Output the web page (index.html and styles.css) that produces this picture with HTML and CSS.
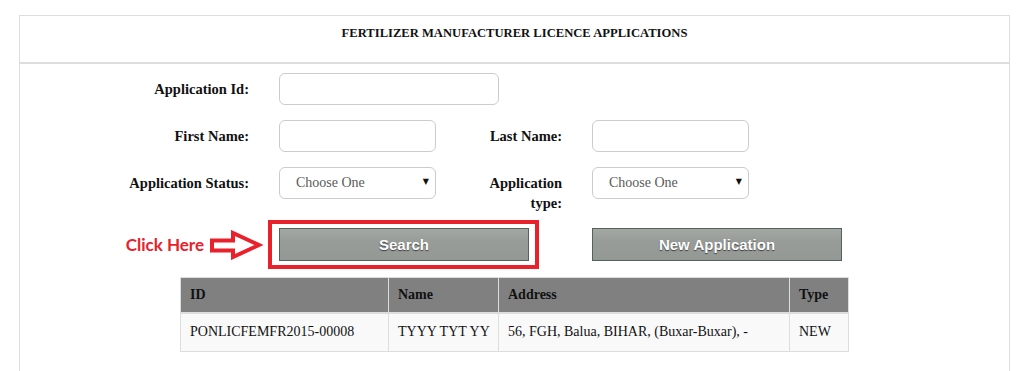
FILE: index.html
```html
<!DOCTYPE html>
<html>
<head>
<meta charset="utf-8">
<title>Fertilizer Manufacturer Licence Applications</title>
<link rel="stylesheet" href="styles.css">
</head>
<body>
<div class="panel">
  <div class="panel-head">FERTILIZER MANUFACTURER LICENCE APPLICATIONS</div>
  <div class="panel-body">
    <div class="form-grid">
      <label class="lbl">Application Id:</label>
      <input class="field field-wide" type="text">

      <label class="lbl">First Name:</label>
      <input class="field" type="text">
      <label class="lbl">Last Name:</label>
      <input class="field" type="text">

      <label class="lbl">Application Status:</label>
      <span class="select-wrap"><select class="field select"><option>Choose One</option></select></span>
      <label class="lbl">Application type:</label>
      <span class="select-wrap"><select class="field select"><option>Choose One</option></select></span>
    </div>

    <div class="btn-row">
      <span class="highlight">
        <span class="callout">
          <span class="callout-text">Click Here</span>
          <svg class="callout-arrow" width="54" height="30" viewBox="0 0 54 30">
            <polygon points="3,10.5 24,10.5 24,3 50,15 24,27 24,20.5 3,20.5" fill="#fff" stroke="#e8212b" stroke-width="4" stroke-linejoin="miter"/>
          </svg>
        </span>
        <button class="btn">Search</button>
      </span>
      <button class="btn btn-new">New Application</button>
    </div>

    <table class="results">
      <thead>
        <tr><th class="c-id">ID</th><th class="c-name">Name</th><th class="c-addr">Address</th><th class="c-type">Type</th></tr>
      </thead>
      <tbody>
        <tr><td>PONLICFEMFR2015-00008</td><td>TYYY TYT YY</td><td>56, FGH, Balua, BIHAR, (Buxar-Buxar), -</td><td>NEW</td></tr>
      </tbody>
    </table>
  </div>
</div>
</body>
</html>
```
FILE: styles.css
```css
html, body {
  margin: 0;
  padding: 0;
  background: #fff;
}
body {
  font-family: "Liberation Serif", "Times New Roman", serif;
  font-size: 14px;
  color: #111;
}
.panel {
  margin: 15px 19px 0 19px;
  border: 1px solid #dddddd;
  border-bottom: none;
  height: calc(100vh - 15px);
  box-sizing: border-box;
  overflow: hidden;
}
.panel-head {
  text-align: center;
  font-weight: bold;
  font-size: 12.6px;
  line-height: 20px;
  padding: 7px 0 19px;
  border-bottom: 2px solid #dddddd;
  color: #111;
}
.panel-body {
  padding: 9px 0 0 80px;
}
.form-grid {
  display: grid;
  grid-template-columns: 149px 157px 96px 157px;
  column-gap: 30px;
  row-gap: 15px;
  align-items: start;
}
.lbl {
  font-weight: bold;
  font-size: 14.5px;
  text-align: right;
  line-height: 20px;
  padding-top: 6px;
  color: #111;
}
.field {
  box-sizing: border-box;
  height: 32px;
  width: 157px;
  border: 1px solid #cccccc;
  border-radius: 6px;
  background: #fff;
  font-family: "Liberation Serif", "Times New Roman", serif;
  font-size: 14px;
  margin: 0;
}
.field-wide {
  width: 220px;
  grid-column: 2 / span 3;
}
.select-wrap {
  position: relative;
  display: block;
  width: 157px;
}
.select {
  -webkit-appearance: none;
  appearance: none;
  padding: 0 0 2px 16px;
  color: #5a5a5a;
  display: block;
  outline: none;
}
.select-wrap::after {
  content: "\25BC";
  position: absolute;
  right: 7px;
  top: 10px;
  font-size: 8px;
  color: #111;
  font-family: "DejaVu Sans", sans-serif;
  pointer-events: none;
}
.btn-row {
  display: flex;
  margin-top: 15px;
  padding-left: 179px;
}
.highlight {
  position: relative;
  display: block;
}
.highlight::before {
  content: "";
  position: absolute;
  left: -11px;
  right: -10px;
  top: -8px;
  bottom: -8px;
  border: 4px solid #e8212b;
  pointer-events: none;
}
.callout {
  position: absolute;
  right: 100%;
  top: 0;
  margin-right: 16px;
  display: flex;
  align-items: center;
  height: 33px;
}
.callout-text {
  font-family: Lato, "Open Sans", sans-serif;
  font-weight: bold;
  font-size: 17px;
  color: #e8212b;
  white-space: nowrap;
  margin-right: 5px;
}
.callout-arrow {
  display: block;
}
.btn {
  display: block;
  box-sizing: border-box;
  width: 250px;
  height: 33px;
  border: 1px solid #53625a;
  background: linear-gradient(#a4a8a5, #989c99 40%, #959996);
  color: #fff;
  font-family: "Liberation Sans", Arial, sans-serif;
  font-weight: bold;
  font-size: 15px;
  text-shadow: 0 1px 1px #3a3a3a;
  padding: 0;
  margin: 0;
}
.btn-new {
  margin-left: 63px;
}
.results {
  margin: 16px 0 0 80px;
  border-collapse: collapse;
  border: 1px solid #dddddd;
  width: 668px;
  table-layout: fixed;
}
.results th {
  background: #808080;
  text-align: left;
  font-weight: bold;
  color: #111;
  height: 35px;
  padding: 0 9px;
  border-left: 1px solid #dddddd;
  border-bottom: 2px solid #dddddd;
  box-sizing: border-box;
}
.results td {
  background: #f9f9f9;
  height: 37px;
  padding: 0 9px;
  border-left: 1px solid #dddddd;
  border-bottom: 1px solid #dddddd;
  color: #111;
  white-space: nowrap;
}
.c-id { width: 208px; }
.c-name { width: 110px; }
.c-addr { width: 291px; }
.c-type { width: 59px; }
```
